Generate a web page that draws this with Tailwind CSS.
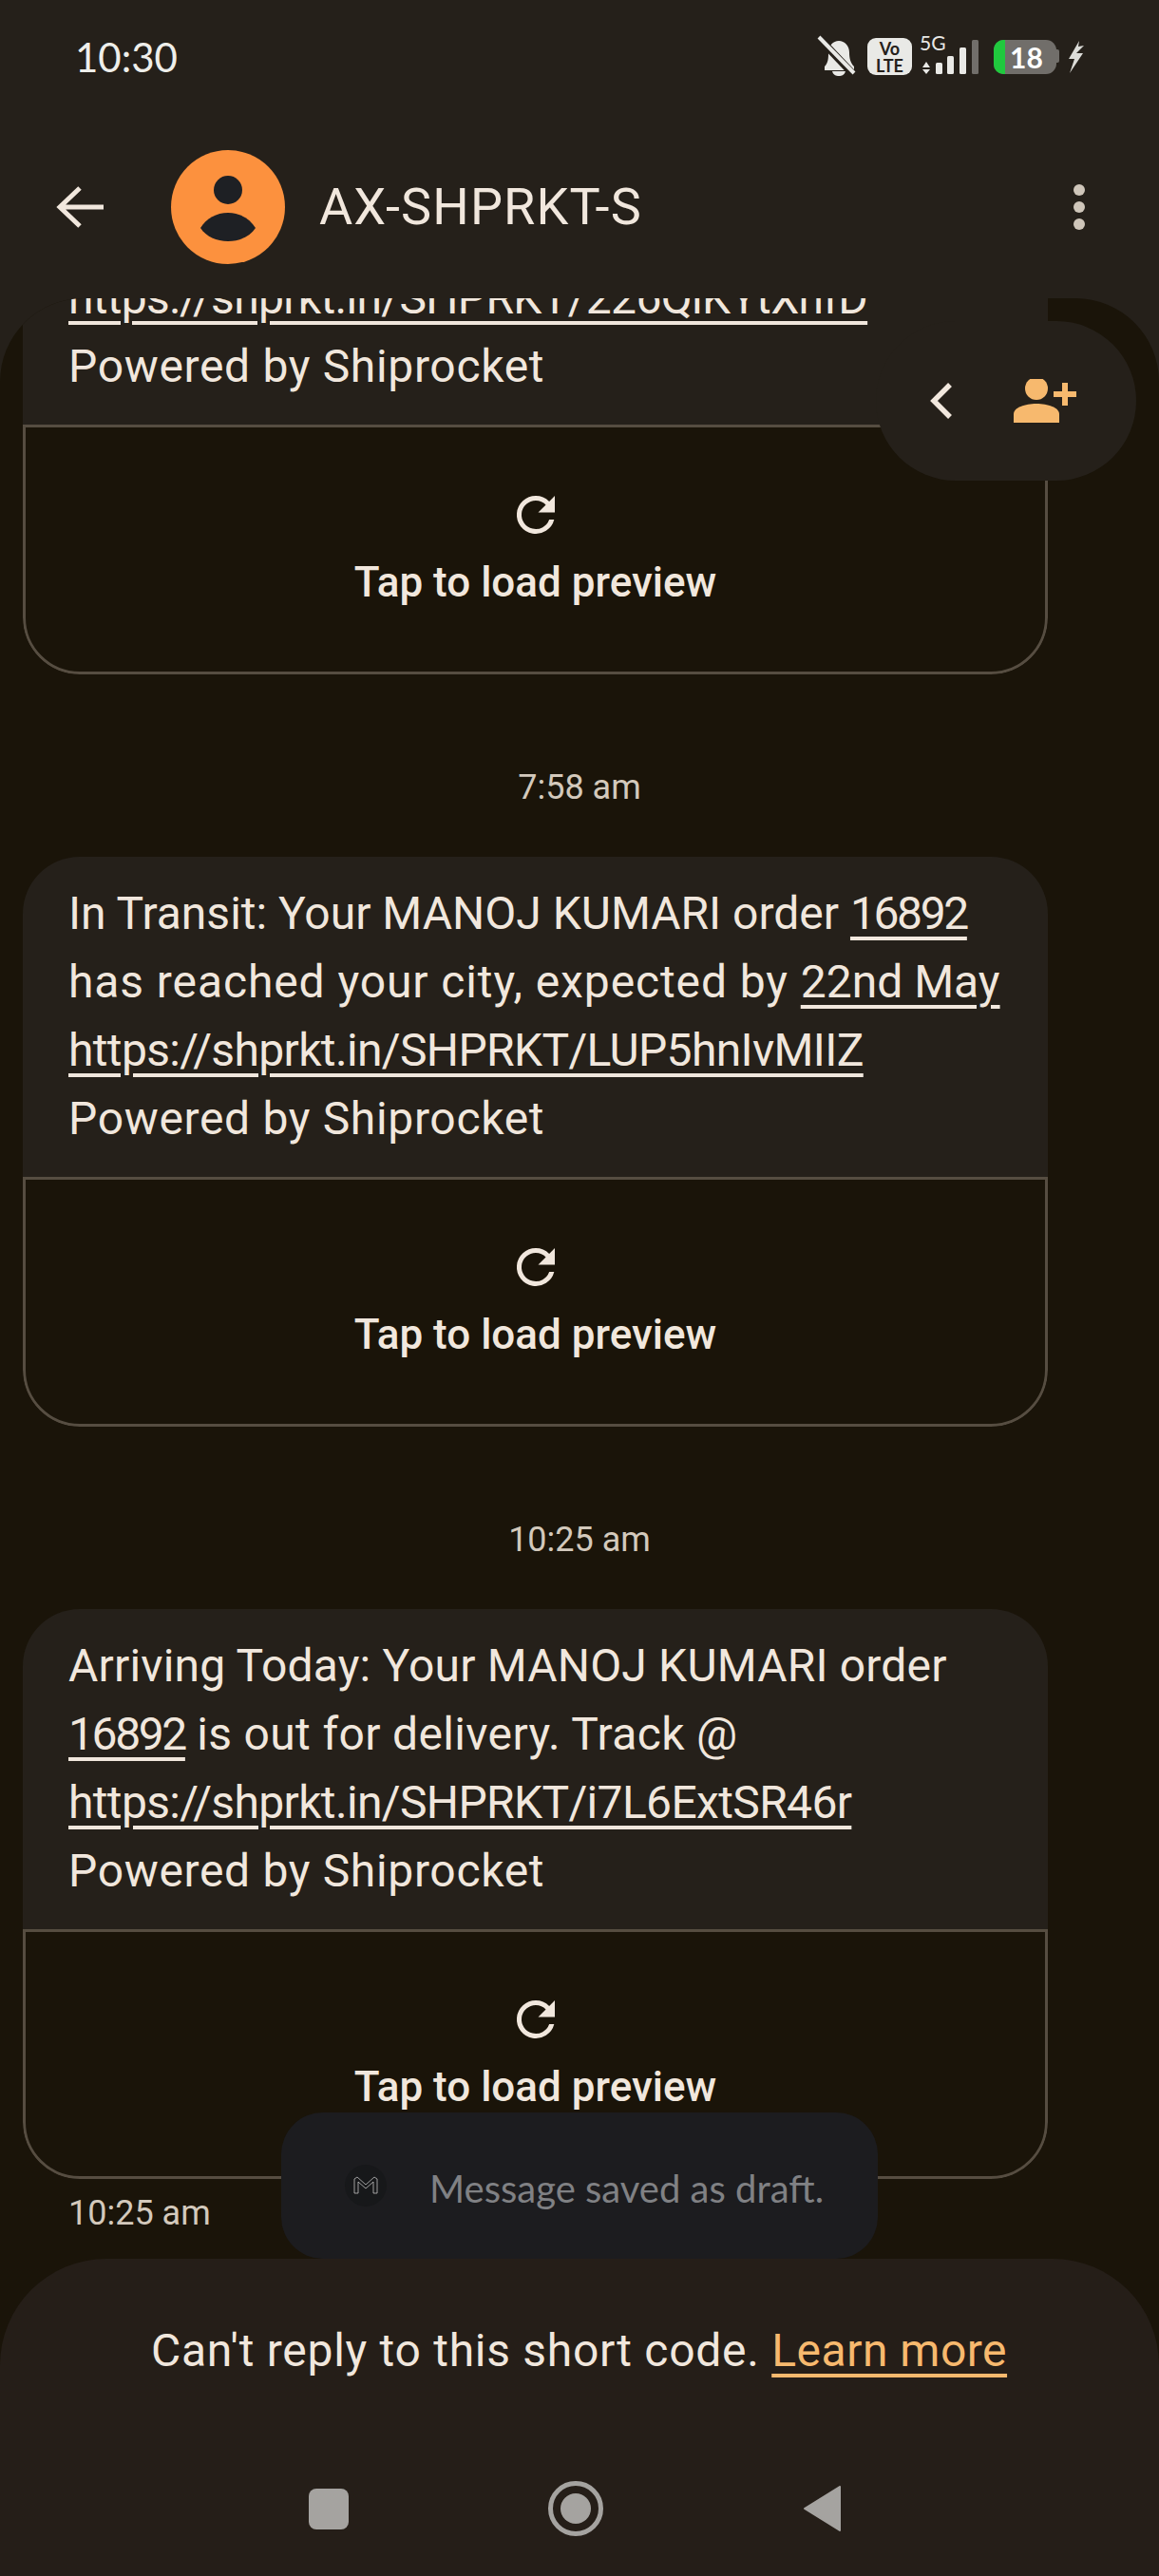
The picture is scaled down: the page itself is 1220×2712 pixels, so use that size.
<!DOCTYPE html>
<html lang="en">
<head>
    <meta charset="UTF-8">
    <title>AX-SHPRKT-S</title>
    <script src="https://cdn.jsdelivr.net/npm/@tailwindcss/browser@4"></script>
</head>
<body class="bg-[#1a1409] font-['Roboto',sans-serif] text-[#f1e7dd]">
<div class="relative w-[1220px] h-[2712px] overflow-hidden flex flex-col bg-[#25201a]">

    <!-- status bar -->
    <div class="relative h-[90px] shrink-0 pl-[79px] pt-[36px] text-[42px] leading-[48px] text-[#eeeeea] font-['Lato',sans-serif]">
        10:30
        <svg class="absolute left-[860px] top-[34px]" width="290" height="50" viewBox="860 34 290 50">
            <path d="M868 70c4-4 4-9 4-15 0-7 5-12 11-12s11 5 11 12c0 6 1 11 5 15v4h-31z" fill="#e9e9e6"/>
            <path d="M876 75h14c-1 4-4 5-7 5s-6-1-7-5z" fill="#e9e9e6"/>
            <path d="M862 40l36 38" stroke="#25201a" stroke-width="8"/>
            <path d="M862 39l37 38" stroke="#e9e9e6" stroke-width="4"/>
            <rect x="913" y="40" width="47" height="39" rx="9" fill="#e9e9e6"/>
            <path d="M971 71l4-6 4 6zM971 73l4 5 4-5z" fill="#e9e9e6"/>
            <rect x="985" y="66" width="7" height="12" rx="1.5" fill="#e9e9e6"/>
            <rect x="997" y="59" width="7" height="19" rx="1.5" fill="#e9e9e6"/>
            <rect x="1010" y="50" width="7" height="28" rx="1.5" fill="#e9e9e6"/>
            <rect x="1023" y="42" width="7" height="36" rx="1.5" fill="#716e6a"/>
            <rect x="1046" y="42" width="66" height="36" rx="11" fill="#716e6a"/>
            <path d="M1058 42h-2a10 10 0 0 0-10 10v16a10 10 0 0 0 10 10h2z" fill="#20c93e"/>
            <path d="M1112 52h1a2 2 0 0 1 2 2v10a2 2 0 0 1-2 2h-1z" fill="#716e6a"/>
            <path d="M1136 43l-11 19h6l-5 15 14-21h-7l8-8-6 1z" fill="#dcdcd8"/>
        </svg>
        <span class="absolute left-[913px] top-[42px] w-[47px] text-center text-[#25201a] font-bold text-[18px] leading-[18px]">Vo<br>LTE</span>
        <span class="absolute left-[968px] top-[35px] text-[#e9e9e6] text-[21px] leading-[20px]">5G</span>
        <span class="absolute left-[1063px] top-[42px] text-white text-[30px] leading-[36px] font-bold">18</span>
    </div>

    <!-- app bar -->
    <div class="h-[224px] shrink-0 flex items-start">
        <div class="flex items-center h-[120px] w-full mt-[68px]">
            <svg class="ml-[59px] shrink-0" width="50" height="48" viewBox="0 0 50 48">
                <path d="M50 24H5M25 4 4 24l21 20" fill="none" stroke="#f1e7dd" stroke-width="5"/>
            </svg>
            <div class="ml-[71px] w-[120px] h-[120px] shrink-0 rounded-full bg-[#fc913e] flex items-center justify-center">
                <svg width="120" height="120" viewBox="0 0 120 120">
                    <circle cx="60" cy="42" r="15" fill="#1e2024"/>
                    <path d="M31 82c6-10 17-16 29-16s23 6 29 16c-6 9-17 14-29 14s-23-5-29-14z" fill="#1e2024"/>
                </svg>
            </div>
            <div class="ml-[36px] text-[54px] leading-[64px] tracking-[1.1px] flex-1">AX-SHPRKT-S</div>
            <div class="mr-[78px] flex flex-col gap-[6px]">
                <div class="w-[12px] h-[12px] rounded-full bg-[#cfc6ba]"></div>
                <div class="w-[12px] h-[12px] rounded-full bg-[#cfc6ba]"></div>
                <div class="w-[12px] h-[12px] rounded-full bg-[#cfc6ba]"></div>
            </div>
        </div>
    </div>

    <!-- message list -->
    <div class="relative flex-1 overflow-hidden rounded-t-[88px] bg-[#1a1409]">
        <div class="mt-[-204px] flex flex-col">

            <div class="ml-[24px] w-[1079px] h-[600px] flex flex-col rounded-[60px] overflow-hidden">
                <div class="h-[337px] shrink-0 bg-[#25201a] pl-[48px] pt-[24px] text-[48px] leading-[72px]">
                    <p>&nbsp;</p>
                    <p>&nbsp;</p>
                    <p class="tracking-[-0.68px]"><span class="underline underline-offset-[8px] decoration-[4px]">https://shprkt.in/SHPRKT/226QlKYtXhfD</span></p>
                    <p class="tracking-[0.66px]">Powered by Shiprocket</p>
                </div>
                <div class="flex-1 border-[3px] border-[#564d41] rounded-b-[60px] flex flex-col items-center pt-[62px]">
                    <svg width="60" height="60" viewBox="0 0 24 24" fill="#f1e7dd"><path d="M17.65 6.35A7.96 7.96 0 0 0 12 4a8 8 0 1 0 7.73 10h-2.08A6 6 0 1 1 12 6c1.66 0 3.14.69 4.22 1.78L13 11h7V4z"/></svg>
                    <div class="mt-[15px] text-[44px] leading-[52px] font-medium">Tap to load preview</div>
                </div>
            </div>

            <div class="h-[192px] pt-[97px] text-center text-[36px] leading-[44px] text-[#d3c9bc]">7:58 am</div>

            <div class="ml-[24px] w-[1079px] h-[600px] flex flex-col rounded-[60px] overflow-hidden">
                <div class="h-[337px] shrink-0 bg-[#25201a] pl-[48px] pt-[24px] text-[48px] leading-[72px]">
                    <p>In Transit: Your MANOJ KUMARI order <span class="underline underline-offset-[8px] decoration-[4px] tracking-[-2.4px]">16892</span></p>
                    <p><span class="tracking-[0.9px]">has reached your city, expected by </span><span class="underline underline-offset-[8px] decoration-[4px]">22nd May</span></p>
                    <p class="tracking-[-0.65px]"><span class="underline underline-offset-[8px] decoration-[4px]">https://shprkt.in/SHPRKT/LUP5hnIvMIIZ</span></p>
                    <p class="tracking-[0.66px]">Powered by Shiprocket</p>
                </div>
                <div class="flex-1 border-[3px] border-[#564d41] rounded-b-[60px] flex flex-col items-center pt-[62px]">
                    <svg width="60" height="60" viewBox="0 0 24 24" fill="#f1e7dd"><path d="M17.65 6.35A7.96 7.96 0 0 0 12 4a8 8 0 1 0 7.73 10h-2.08A6 6 0 1 1 12 6c1.66 0 3.14.69 4.22 1.78L13 11h7V4z"/></svg>
                    <div class="mt-[15px] text-[44px] leading-[52px] font-medium">Tap to load preview</div>
                </div>
            </div>

            <div class="h-[192px] pt-[97px] text-center text-[36px] leading-[44px] text-[#d3c9bc]">10:25 am</div>

            <div class="ml-[24px] w-[1079px] h-[600px] flex flex-col rounded-[60px] overflow-hidden">
                <div class="h-[337px] shrink-0 bg-[#25201a] pl-[48px] pt-[24px] text-[48px] leading-[72px]">
                    <p class="tracking-[0.18px]">Arriving Today: Your MANOJ KUMARI order</p>
                    <p><span class="underline underline-offset-[8px] decoration-[4px] tracking-[-2.4px]">16892</span><span class="tracking-[0.35px]"> is out for delivery. Track @</span></p>
                    <p class="tracking-[-0.65px]"><span class="underline underline-offset-[8px] decoration-[4px]">https://shprkt.in/SHPRKT/i7L6ExtSR46r</span></p>
                    <p class="tracking-[0.66px]">Powered by Shiprocket</p>
                </div>
                <div class="flex-1 border-[3px] border-[#564d41] rounded-b-[60px] flex flex-col items-center pt-[62px]">
                    <svg width="60" height="60" viewBox="0 0 24 24" fill="#f1e7dd"><path d="M17.65 6.35A7.96 7.96 0 0 0 12 4a8 8 0 1 0 7.73 10h-2.08A6 6 0 1 1 12 6c1.66 0 3.14.69 4.22 1.78L13 11h7V4z"/></svg>
                    <div class="mt-[15px] text-[44px] leading-[52px] font-medium">Tap to load preview</div>
                </div>
            </div>

            <div class="pl-[72px] pt-[14px] text-[36px] leading-[44px] text-[#d3c9bc]">10:25 am</div>
        </div>

        <!-- floating contact pill -->
        <div class="absolute left-[922px] top-[24px] w-[274px] h-[168px] rounded-[84px] bg-[#25201a] flex items-center">
            <svg class="ml-[56px] shrink-0" width="26" height="40" viewBox="0 0 26 40"><path d="M22 3 5 20l17 17" fill="none" stroke="#f1e7dd" stroke-width="5.5"/></svg>
            <svg class="ml-[63px] shrink-0" width="66" height="46" viewBox="0 0 66 46" fill="#f7b96e">
                <circle cx="24" cy="10" r="12"/>
                <path d="M0 46v-9c0-7 12-11 24-11s24 4 24 11v9z"/>
                <path d="M51 4h6v9h9v6h-9v9h-6v-9h-9v-6h9z"/>
            </svg>
        </div>

        <!-- draft toast -->
        <div class="absolute left-[296px] top-[1910px] w-[628px] h-[154px] rounded-[44px] bg-[#1c1c1f] flex items-center">
            <div class="ml-[67px] w-[44px] h-[44px] rounded-full bg-[#17181a] flex items-center justify-center shrink-0">
                <svg width="26" height="20" viewBox="0 0 26 20" fill="none" stroke="#d8d8d8" stroke-width="0.7"><path d="M1 18V3l3-2 9 8 9-8 3 2v15h-4V6l-8 7-8-7v12z"/></svg>
            </div>
            <div class="ml-[45px] mt-[6px] text-[40px] text-[#808184] font-['Lato',sans-serif] whitespace-nowrap">Message saved as draft.</div>
        </div>
    </div>

    <!-- short code footer -->
    <div class="absolute left-0 top-[2378px] w-[1220px] h-[334px] rounded-t-[112px] bg-[#251e18] flex flex-col">
        <div class="mt-[65px] ml-[159px] text-[48px] leading-[64px] whitespace-nowrap"><span class="tracking-[0.72px]">Can't reply to this short code. </span><span class="text-[#f7b96e] tracking-[0.5px] underline underline-offset-[8px] decoration-[4px]">Learn more</span></div>
        <div class="mt-[105px] pl-[325px] flex items-center">
            <div class="w-[42px] h-[43px] rounded-[8px] bg-[#a5a3a0]"></div>
            <div class="ml-[210px] w-[58px] h-[58px] rounded-full border-[5px] border-[#a5a3a0] flex items-center justify-center">
                <div class="w-[32px] h-[32px] rounded-full bg-[#a5a3a0]"></div>
            </div>
            <svg class="ml-[211px]" width="40" height="48" viewBox="0 0 40 48"><path d="M38 1v46L1 24z" fill="#a5a3a0" stroke="#a5a3a0" stroke-width="2" stroke-linejoin="round"/></svg>
        </div>
    </div>
</div>
</body>
</html>
